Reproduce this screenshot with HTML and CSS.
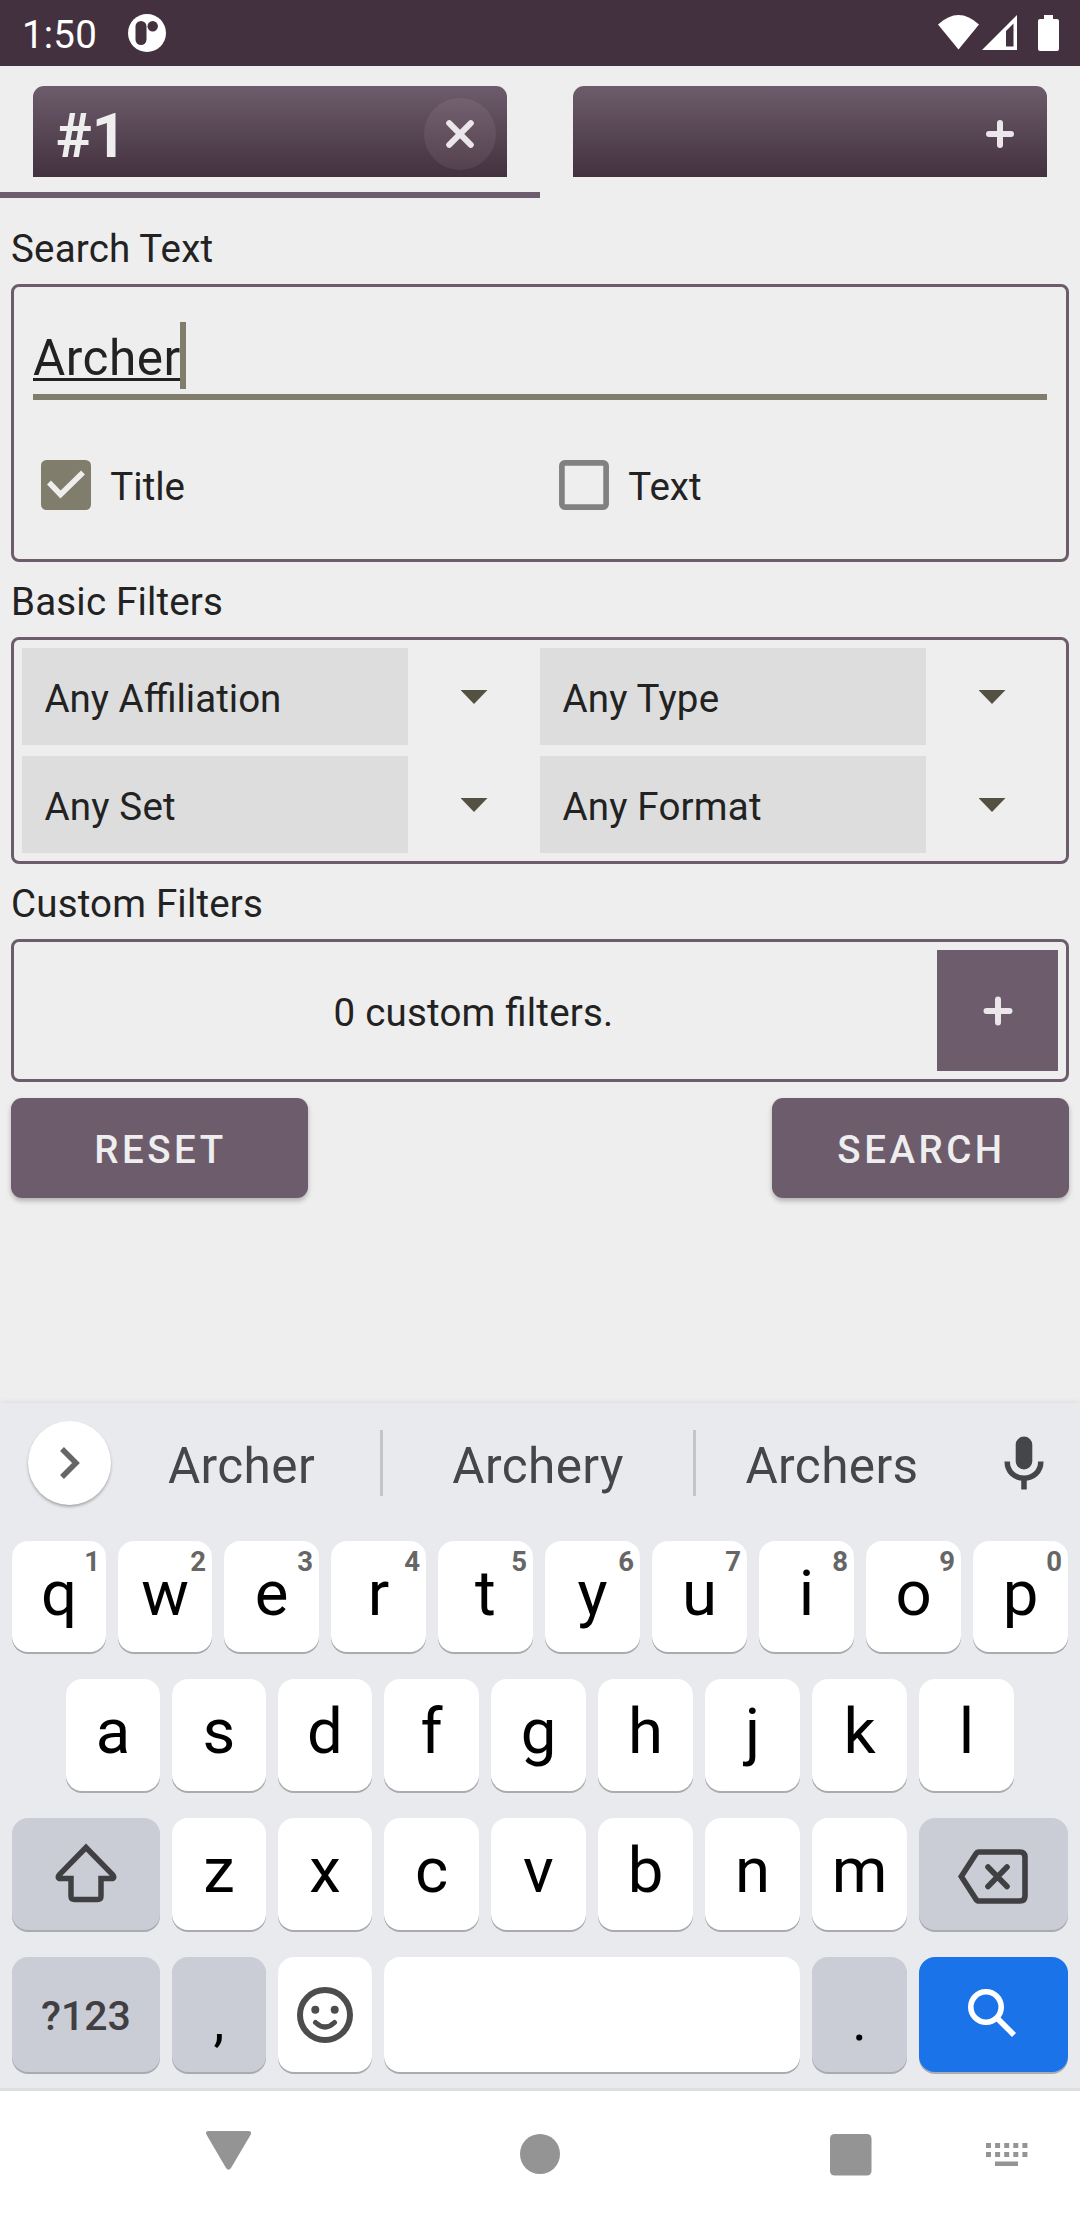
FILE: index.html
```html
<!DOCTYPE html>
<html lang="en">
<head>
<meta charset="utf-8">
<title>Card Search</title>
<link rel="stylesheet" href="styles.css">
</head>
<body>
<header class="status">
  <span class="clock">1:50</span>
  <svg class="status-app" width="38" height="38" viewBox="0 0 38 38"><circle cx="19" cy="19" r="19" fill="#fff"/><rect x="7.5" y="7" width="11" height="24" rx="5.5" fill="#43313f"/><circle cx="24.7" cy="12.2" r="5.2" fill="#43313f"/></svg>
  <svg class="status-icons" width="122" height="38" viewBox="0 0 122 38" fill="#fff"><path d="M0 10.5Q20.500-8.500 41 10.500L20.500 35.500Z"/><path fill-rule="evenodd" d="M44 36L79 1V36ZM68 17V32.500H75.500V9.500Z"/><path d="M106 1h9v4h4a2 2 0 0 1 2 2v28a2 2 0 0 1-2 2h-17a2 2 0 0 1-2-2V7a2 2 0 0 1 2-2h4z"/></svg>
</header>

<nav class="tabs">
  <div class="tab active">
    <div class="tab-card"><span class="tab-name">#1</span>
      <span class="tab-btn close"><svg width="28" height="28" viewBox="0 0 28 28"><path d="M3.200 3.200L24.800 24.800M24.800 3.200L3.200 24.800"/></svg></span>
    </div>
  </div>
  <div class="tab">
    <div class="tab-card"><span class="tab-name"></span>
      <span class="tab-btn"><svg width="28" height="28" viewBox="0 0 28 28"><path d="M14 3V25M3 14H25"/></svg></span>
    </div>
  </div>
</nav>

<main class="form">
  <h2 class="label first">Search Text</h2>
  <section class="group text-group">
    <div class="input"><span class="typed">Archer</span><i class="caret"></i></div>
    <div class="checks">
      <label class="check"><svg width="50" height="50" viewBox="0 0 50 50"><rect width="50" height="50" rx="5.500" fill="#807d6d"/><path d="M8 22.500L19.500 34.500L42 12.500" fill="none" stroke="#eee" stroke-width="5.500"/></svg><span>Title</span></label>
      <label class="check"><svg width="50" height="50" viewBox="0 0 50 50"><rect x="2.900" y="2.900" width="44.200" height="44.200" rx="2.800" fill="none" stroke="#818181" stroke-width="5.700"/></svg><span>Text</span></label>
    </div>
  </section>

  <h2 class="label">Basic Filters</h2>
  <section class="group filters">
    <div class="select"><span class="value tight">Any Affiliation</span><i class="arrow"></i></div>
    <div class="select"><span class="value">Any Type</span><i class="arrow"></i></div>
    <div class="select"><span class="value">Any Set</span><i class="arrow"></i></div>
    <div class="select"><span class="value">Any Format</span><i class="arrow"></i></div>
  </section>

  <h2 class="label">Custom Filters</h2>
  <section class="group custom">
    <p class="count">0 custom filters.</p>
    <span class="add"><svg width="30" height="30" viewBox="0 0 30 30"><path d="M15 3.500V26.500M3.500 15H26.500"/></svg></span>
  </section>

  <div class="actions"><button class="btn">RESET</button><button class="btn">SEARCH</button></div>
</main>

<section class="keyboard">
  <div class="suggest">
    <span class="expand"><svg width="20" height="32" viewBox="0 0 20 32"><path d="M2 2L16 16L2 30" fill="none" stroke="#666" stroke-width="5.500"/></svg></span>
    <span class="word w1">Archer</span>
    <span class="word w2">Archery</span>
    <span class="word w3">Archers</span>
    <svg class="mic" width="40" height="54" viewBox="0 0 40 54"><rect x="11.700" y="0.500" width="16.600" height="33" rx="8.300" fill="#444648"/><path d="M3.200 25.500C3.200 36 11 42.200 20 42.200S36.800 36 36.800 25.500M20 42V53.500" fill="none" stroke="#444648" stroke-width="5.500"/></svg>
  </div>
  <div class="row r1">
    <div class="key slim">q<sup>1</sup></div><div class="key slim">w<sup>2</sup></div><div class="key">e<sup>3</sup></div><div class="key">r<sup>4</sup></div><div class="key">t<sup>5</sup></div><div class="key">y<sup>6</sup></div><div class="key">u<sup>7</sup></div><div class="key">i<sup>8</sup></div><div class="key">o<sup>9</sup></div><div class="key">p<sup>0</sup></div>
  </div>
  <div class="row r2">
    <div class="key slim">a</div><div class="key slim">s</div><div class="key slim">d</div><div class="key">f</div><div class="key">g</div><div class="key">h</div><div class="key">j</div><div class="key">k</div><div class="key">l</div>
  </div>
  <div class="row r3">
    <div class="key side gray icon shift"><svg width="62" height="60" viewBox="0 0 62 60"><path d="M31 4.500L4.500 31.500C2.500 34 3 35.500 5.500 35.500H16V53C16 55.500 17 56.500 19.500 56.500H42.500C45 56.500 46 55.500 46 53V35.500H56.500C59 35.500 59.500 34 57.500 31.500Z" fill="none" stroke="#404042" stroke-width="5.500"/></svg></div>
    <div class="key slim">z</div><div class="key slim">x</div><div class="key">c</div><div class="key">v</div><div class="key">b</div><div class="key">n</div><div class="key">m</div>
    <div class="key side wide gray icon back"><svg width="70" height="55" viewBox="0 0 70 55"><path d="M21 3Q19 3 17.800 5L3.300 27.500L17.800 50Q19 52 21 52H62Q67 52 67 47V8Q67 3 62 3Z" fill="none" stroke="#404042" stroke-width="5.600"/><path d="M30 18L49 37.500M49 18L30 37.500" stroke="#404042" stroke-width="5.600" stroke-linecap="round"/></svg></div>
  </div>
  <div class="row r4">
    <div class="key side gray sym">?123</div>
    <div class="key slim gray punct">,</div>
    <div class="key slim icon"><svg width="56" height="56" viewBox="0 0 56 56"><circle cx="28" cy="28" r="25" fill="none" stroke="#4c4c4c" stroke-width="6"/><circle cx="18.300" cy="22.700" r="4" fill="#4c4c4c"/><circle cx="37.700" cy="22.700" r="4" fill="#4c4c4c"/><path d="M18.500 35.500Q28 44.500 37.500 35.500" fill="none" stroke="#4c4c4c" stroke-width="5" stroke-linecap="round"/></svg></div>
    <div class="key space"></div>
    <div class="key gray punct">.</div>
    <div class="key side wide blue icon go"><svg width="48" height="48" viewBox="0 0 48 48"><circle cx="18" cy="18" r="15.200" fill="none" stroke="#fff" stroke-width="5.600"/><path d="M29 29L46 46" stroke="#fff" stroke-width="5.600"/></svg></div>
  </div>
</section>

<footer class="navbar">
  <svg width="1080" height="129" viewBox="0 0 1080 129" fill="#949494"><path d="M209 40H248Q252.500 40 250.500 44L231 77Q228.500 80.500 226 77L206.700 44Q204.500 40 209 40Z"/><circle cx="540" cy="63" r="20"/><rect x="830" y="43" width="41.500" height="41.500" rx="4.500"/><path d="M986 52h5v5h-5zM995.100 52h5v5h-5zM1004.200 52h5v5h-5zM1013.300 52h5v5h-5zM1022.400 52h5v5h-5zM986 61h5v5h-5zM995.100 61h5v5h-5zM1004.200 61h5v5h-5zM1013.300 61h5v5h-5zM1022.400 61h5v5h-5zM995 70.500h23v4.500h-23z"/></svg>
</footer>
</body>
</html>
```
FILE: styles.css
```css
* { box-sizing: border-box; }
body {
  margin: 0;
  width: 1080px;
  height: 2220px;
  display: flex;
  flex-direction: column;
  background: #eee;
  color: #222;
  font-family: Roboto, "Liberation Sans", sans-serif;
  font-size: 38.5px;
  overflow: hidden;
}
svg { display: block; flex: none; }
i { display: block; }

.status {
  height: 66px;
  flex: none;
  display: flex;
  align-items: flex-start;
  padding: 14px 20px 0 22px;
  background: #43313f;
  color: #fff;
}
.clock { width: 105.5px; line-height: 42px; letter-spacing: .2px; }
.status-icons { margin-left: auto; }

.tabs { display: flex; height: 132px; flex: none; }
.tab { flex: 1; padding: 20px 33px 0; border-bottom: 6px solid transparent; }
.tab.active { border-color: #6d5c6b; }
.tab-card {
  height: 91px;
  display: flex;
  align-items: center;
  justify-content: space-between;
  padding: 5px 11px 0 23px;
  border-radius: 11px 11px 0 0;
  background: linear-gradient(#6d5c6b, #43313f);
  color: #eee;
}
.tab-name { padding-top: 5px; font-size: 60.5px; font-weight: 700; line-height: 80px; }
.tab-btn {
  width: 72px;
  height: 72px;
  display: grid;
  place-items: center;
  border-radius: 50%;
}
.tab-btn.close { background: rgba(255, 235, 235, .08); }
.tab-btn path { stroke: #ebe6ea; stroke-width: 6; stroke-linecap: round; }

.form { height: 1205px; flex: none; padding: 0 11px; }
.label {
  margin: 0;
  padding: 17px 0 12px;
  font-size: 38.5px;
  font-weight: 400;
  line-height: 46px;
  letter-spacing: .18px;
}
.label.first { padding-top: 28px; }
.group { border: 3px solid #6d5c6b; border-radius: 8px; }

.text-group { height: 278px; padding: 35px 8px 0; }
.input {
  height: 78px;
  display: flex;
  align-items: flex-start;
  margin: 0 11px;
  border-bottom: 6px solid #807d6d;
}
.typed {
  width: 147px;
  font-size: 49.5px;
  line-height: 72px;
  letter-spacing: .5px;
  text-decoration: underline 3px;
  text-underline-offset: 3px;
  text-decoration-skip-ink: none;
}
.caret { width: 6px; height: 67px; background: #807d6d; }
.checks { display: grid; grid-template-columns: 1fr 1fr; margin-top: 60px; }
.check { display: flex; gap: 19.3px; padding-left: 19px; line-height: 54px; }

.filters { height: 227px; display: grid; grid-template-columns: 1fr 1fr; row-gap: 11px; padding: 8px; }
.select { display: flex; height: 97px; }
.value { width: 386px; padding: 4px 0 0 22.4px; background: #ddd; line-height: 93px; letter-spacing: .2px; }
.value.tight { letter-spacing: 0; }
.arrow {
  width: 27px;
  height: 14px;
  margin: 42px auto 0;
  background: #545142;
  clip-path: polygon(0 0, 100% 0, 50% 100%);
}

.custom { height: 143px; display: flex; padding: 8px; }
.count {
  flex: 1;
  margin: 0;
  padding: 5px 12px 0 0;
  font-feature-settings: "liga" 1;
  letter-spacing: .2px;
  line-height: 116px;
  text-align: center;
}
.add { width: 121px; height: 121px; display: grid; place-items: center; background: #6d5c6b; }
.add path { stroke: #ebe6ea; stroke-width: 6; stroke-linecap: round; }

.actions { display: flex; justify-content: space-between; margin-top: 16px; }
.btn {
  width: 297px;
  height: 100px;
  padding: 4px 0 0 2px;
  border: 0;
  border-radius: 11px;
  background: #6d5c6b;
  box-shadow: 0 3px 5px rgba(0, 0, 0, .25);
  color: #eee;
  font: 500 38.5px/96px Roboto, "Liberation Sans", sans-serif;
  letter-spacing: 3.5px;
}

.keyboard {
  height: 685px;
  flex: none;
  background: #e8eaed;
  box-shadow: 0 -1px 5px rgba(0, 0, 0, .08);
}
.suggest { display: flex; align-items: center; height: 120px; padding: 0 36px 0 28px; margin-bottom: 18px; }
.expand {
  width: 83px;
  height: 84px;
  flex: none;
  display: grid;
  place-items: center;
  border-radius: 50%;
  background: #fff;
  box-shadow: 0 2px 3px rgba(0, 0, 0, .28);
}
.word {
  height: 66px;
  padding-top: 6px;
  border-right: 3px solid #c3c5c9;
  color: #444648;
  font-size: 49.5px;
  line-height: 60px;
  letter-spacing: .4px;
  text-align: center;
}
.w1 { width: 272px; padding-right: 8px; }
.w2 { width: 313px; }
.w3 { width: 272px; border: 0; }
.mic { margin-left: auto; }

.row { display: flex; gap: 12px; height: 112px; padding: 0 12px; margin-bottom: 27px; }
.r1 { height: 111px; }
.r2 { padding: 0 66px; }
.r4 { height: 115px; margin: 0; }
.key {
  flex: 1 1 0;
  position: relative;
  border-radius: 16px;
  background: #fff;
  box-shadow: 0 2px 0 #a9abae;
  color: #000;
  font-size: 63.5px;
  line-height: 105px;
  text-align: center;
}
.key sup {
  position: absolute;
  top: 5px;
  right: 6px;
  color: #666;
  font-size: 27.5px;
  font-weight: 700;
  line-height: 32px;
}
.slim { flex: 0 0 94px; }
.side { flex: 0 0 148px; }
.wide { flex-basis: 149px; }
.gray { background: #cacdd6; }
.blue { background: #1a73e8; }
.icon { display: grid; place-items: center; }
.shift { padding-bottom: 2px; }
.back { padding: 5px 2px 0 0; }
.go { padding: 0 3px 3px 0; }
.sym { color: #404042; font-size: 41px; font-weight: 500; line-height: 118px; }
.punct { font-size: 55px; line-height: 129px; }
.space { flex: 0 0 416px; }

.navbar { flex: 1; border-top: 3px solid #dedede; background: #fff; }
```
